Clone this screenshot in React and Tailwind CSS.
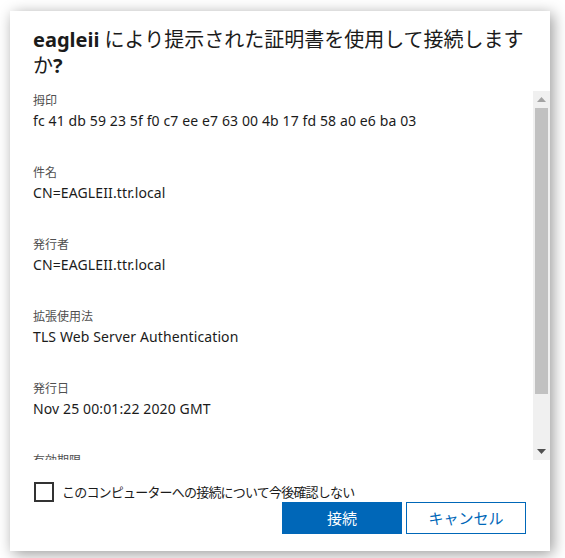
import React from 'react';

const fields = [
    { label: '拇印', value: 'fc 41 db 59 23 5f f0 c7 ee e7 63 00 4b 17 fd 58 a0 e6 ba 03' },
    { label: '件名', value: 'CN=EAGLEII.ttr.local' },
    { label: '発行者', value: 'CN=EAGLEII.ttr.local' },
    { label: '拡張使用法', value: 'TLS Web Server Authentication' },
    { label: '発行日', value: 'Nov 25 00:01:22 2020 GMT' },
    { label: '有効期限', value: null },
];

const font = "font-['Noto_Sans','Noto_Sans_CJK_JP',sans-serif]";

const ScrollBar = () => (
    <div className="w-[17px] h-full bg-[#f0f0f0] flex flex-col shrink-0">
        <div className="h-[17px] flex items-center justify-center">
            <svg width="9" height="5" viewBox="0 0 9 5">
                <path d="M0 5 L4.5 0 L9 5 Z" fill="#a3a3a3" />
            </svg>
        </div>
        <div className="mx-[2px] h-[286px] bg-[#c1c1c1]" />
        <div className="flex-1" />
        <div className="h-[17px] flex items-center justify-center">
            <svg width="9" height="5" viewBox="0 0 9 5">
                <path d="M0 0 L9 0 L4.5 5 Z" fill="#505050" />
            </svg>
        </div>
    </div>
);

export default function App() {
    return (
        <div className={`min-h-screen bg-white pt-[11px] pl-[10px] ${font}`}>
            <div className="w-[540px] h-[540px] bg-white shadow-[3px_3px_14px_rgba(0,0,0,0.4)] flex flex-col">
                <h1 className="pt-[16px] pl-[23px] pr-[10px] text-[20px] leading-[26px] text-[#1b1b1b] font-normal">
                    <span className="font-bold">eagleii</span> により提示された証明書を使用して接続します
                    <br />
                    か<span className="font-bold">?</span>
                </h1>

                <div className="mt-[12px] h-[369px] flex">
                    <div className="flex-1 overflow-hidden pl-[23px] pt-[2px]">
                        {fields.map((f) => (
                            <div key={f.label} className="mb-[34px]">
                                <div className="text-[12px] leading-[16px] text-[#505050]">{f.label}</div>
                                {f.value && (
                                    <div className="mt-[2px] text-[14px] leading-[20px] tracking-[0.12px] text-[#1b1b1b]">
                                        {f.value}
                                    </div>
                                )}
                            </div>
                        ))}
                    </div>
                    <ScrollBar />
                </div>

                <div className="mt-[22px] ml-[24px] flex items-center gap-[8px]">
                    <span className="w-[20px] h-[20px] border-2 border-[#333333] bg-white shrink-0" />
                    <span className="text-[13px] leading-[20px] tracking-[-0.8px] text-[#1b1b1b]">
                        このコンピューターへの接続について今後確認しない
                    </span>
                </div>

                <div className="flex justify-end gap-[4px] pr-[24px]">
                    <button className="w-[120px] h-[32px] bg-[#0067b8] text-white text-[15px]">
                        接続
                    </button>
                    <button className="w-[120px] h-[32px] border border-[#0067b8] bg-white text-[#0067b8] text-[15px]">
                        キャンセル
                    </button>
                </div>
            </div>
        </div>
    );
}
